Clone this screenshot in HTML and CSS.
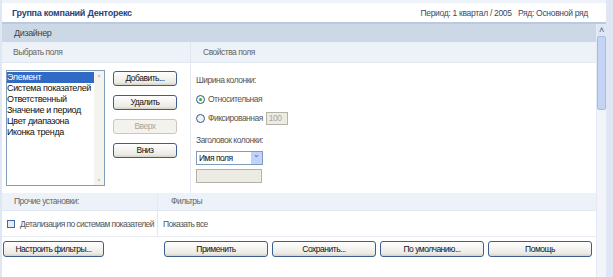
FILE: index.html
```html
<!DOCTYPE html>
<html lang="ru">
<head>
<meta charset="utf-8">
<link rel="stylesheet" href="styles.css">
</head>
<body>
<div class="frame">
  <div class="header">
    <span class="title">Группа компаний Денторекс</span>
    <span class="period">Период: 1 квартал / 2005&nbsp;&nbsp; Ряд: Основной ряд</span>
  </div>
  <div class="body-row">
    <div class="main">
      <div class="band">Дизайнер</div>
      <div class="sub sub-top">
        <div class="cell-l">Выбрать поля</div>
        <div class="cell-r">Свойства поля</div>
      </div>
      <div class="content">
        <div class="pick">
          <div class="listbox">
            <div class="items">
              <div class="item sel">Элемент</div>
              <div class="item">Система показателей</div>
              <div class="item">Ответственный</div>
              <div class="item">Значение и период</div>
              <div class="item">Цвет диапазона</div>
              <div class="item">Иконка тренда</div>
            </div>
            <div class="lscroll">
              <span class="arr">&#9650;</span>
              <span class="arr">&#9660;</span>
            </div>
          </div>
          <div class="btns">
            <div class="btn">Добавить...</div>
            <div class="btn">Удалить</div>
            <div class="btn disabled">Вверх</div>
            <div class="btn">Вниз</div>
          </div>
        </div>
        <div class="props">
          <div class="lbl">Ширина колонки:</div>
          <div class="radio-row"><span class="radio on"></span>Относительная</div>
          <div class="radio-row"><span class="radio"></span>Фиксированная<span class="num">100</span></div>
          <div class="lbl lbl2">Заголовок колонки:</div>
          <div class="select"><span>Имя поля</span><span class="sel-btn">&#8964;</span></div>
          <div class="dis-input"></div>
        </div>
      </div>
      <div class="sub sub-mid">
        <div class="cell-l2">Прочие установки:</div>
        <div class="cell-r2">Фильтры</div>
      </div>
      <div class="opts">
        <div class="cell-l2"><span class="chk"></span>Детализация по системам показателей</div>
        <div class="cell-r2 plain">Показать все</div>
      </div>
      <div class="actions">
        <div class="btn wide first">Настроить фильтры...</div>
        <div class="right-btns">
          <div class="btn wide">Применить</div>
          <div class="btn wide">Сохранить...</div>
          <div class="btn wide">По умолчанию...</div>
          <div class="btn wide">Помощь</div>
        </div>
      </div>
    </div>
    <div class="vscroll">
      <div class="vs-up">&#708;</div>
      <div class="vs-thumb"></div>
    </div>
  </div>
</div>
</body>
</html>
```
FILE: styles.css
```css
* { box-sizing: border-box; }
html, body { margin: 0; padding: 0; }
body {
  width: 613px;
  height: 277px;
  overflow: hidden;
  background: #dfe7f4;
  font-family: "Liberation Sans", Arial, sans-serif;
  font-size: 9px;
  letter-spacing: -0.35px;
  color: #222;
}
.frame {
  margin-left: 2px;
  width: 604px;
  height: 277px;
  background: #fff;
  display: flex;
  flex-direction: column;
}
.header {
  height: 24px;
  border-top: 3px solid #eef2f9;
  border-bottom: 2px solid #b9c9e2;
  background: #fff;
  display: flex;
  align-items: center;
  justify-content: space-between;
  padding: 0 18px 0 10px;
  white-space: nowrap;
}
.title { color: #27437c; font-weight: bold; letter-spacing: -0.25px; font-size: 9px; }
.period { color: #3b4a66; font-size: 8.5px; letter-spacing: -0.3px; }
.body-row { flex: 1; display: flex; }
.main { width: 594px; display: flex; flex-direction: column; }
.band {
  height: 18px;
  background: #cdd8e6;
  color: #444;
  padding-left: 12px;
  line-height: 18px;
}
.sub {
  display: flex;
  background: #edf2f9;
  color: #666;
  border-bottom: 1px solid #e2e8f2;
  white-space: nowrap;
  font-size: 8.5px;
  letter-spacing: -0.5px;
}
.sub-top { height: 21px; line-height: 20px; }
.cell-l { width: 189px; padding-left: 11px; border-right: 1px solid #dfe6f1; }
.cell-r { padding-left: 12px; }
.content { display: flex; height: 130px; }
.pick {
  width: 189px;
  border-right: 1px solid #e6ebf3;
  display: flex;
  padding: 7px 0 0 4px;
  gap: 8px;
}
.listbox {
  width: 99px;
  height: 116px;
  border: 1px solid #7f9db9;
  display: flex;
  background: #fff;
}
.items { flex: 1; padding-top: 1px; }
.item { height: 11px; line-height: 11px; color: #111; padding-left: 0; white-space: nowrap; }
.item.sel { background: #316ac5; color: #fff; }
.lscroll {
  width: 10px;
  background: #f4f3ee;
  display: flex;
  flex-direction: column;
  justify-content: space-between;
  align-items: center;
}
.arr { font-size: 5px; color: #c9c7ba; line-height: 9px; letter-spacing: 0; }
.btns { display: flex; flex-direction: column; gap: 9px; padding-top: 1px; }
.btn {
  width: 64px;
  height: 15px;
  border: 1px solid #3d5f8f;
  border-radius: 3px;
  background: linear-gradient(#fefefe, #ecebe6 80%, #d6d2c4);
  text-align: center;
  line-height: 13px;
  color: #111;
  white-space: nowrap;
  font-size: 8.5px;
  letter-spacing: -0.5px;
}
.btn.disabled { border-color: #cac8bb; color: #aaa89a; background: #f3f2ec; }
.props { padding: 12px 0 0 5px; color: #555; white-space: nowrap; font-size: 8.5px; letter-spacing: -0.5px; }
.lbl { height: 11px; line-height: 11px; }
.radio-row { display: flex; align-items: center; height: 12px; margin-top: 7px; }
.radio {
  width: 9px; height: 9px; border-radius: 50%;
  border: 1px solid #2d5b99;
  background: #f3f3ee;
  margin-right: 3px;
  position: relative;
}
.radio.on::after {
  content: ""; position: absolute; left: 2px; top: 2px;
  width: 3px; height: 3px; border-radius: 50%; background: #30b030;
}
.num {
  margin-left: 3px;
  width: 22px; height: 13px;
  border: 1px solid #b5b3a5;
  background: #ecebe4;
  color: #aaa;
  line-height: 11px;
  padding-left: 2px;
}
.lbl2 { margin-top: 11px; }
.select {
  margin-top: 5px;
  width: 67px; height: 14px;
  border: 1px solid #7f9db9;
  display: flex;
  justify-content: space-between;
  line-height: 12px;
  color: #111;
  padding-left: 2px;
}
.sel-btn {
  width: 11px; background: #c1d3fb; color: #4d6185; text-align: center;
  font-size: 8px; line-height: 6px;
}
.dis-input {
  margin-top: 4px;
  width: 66px; height: 14px;
  border: 1px solid #b5b3a5;
  background: #ecebe4;
}
.sub-mid { height: 18px; line-height: 17px; }
.cell-l2 { width: 156px; flex: none; padding-left: 12px; border-right: 1px solid #e3e9f2; display: flex; align-items: center; white-space: nowrap; }
.cell-r2 { padding-left: 13px; }
.opts {
  display: flex;
  height: 26px;
  line-height: 26px;
  color: #555;
  border-bottom: 1px solid #e8edf5;
  font-size: 8.5px;
  letter-spacing: -0.6px;
}
.opts .cell-l2 { padding-left: 5px; }
.opts .plain { padding-left: 5px; color: #555; }
.chk {
  width: 8px; height: 8px; border: 1px solid #3e6aa8; background: #eaeaea;
  margin-right: 5px; flex: none;
}
.actions { display: flex; padding: 4px 0 0 1px; justify-content: space-between; }
.right-btns { display: flex; gap: 4px; padding-right: 4px; }
.btn.wide { width: 104px; height: 16px; line-height: 14px; }
.btn.wide.first { width: 101px; }
.vscroll {
  width: 10px;
  background: #f2f4f9;
  border-left: 1px solid #e5ebf5;
}
.vs-up { height: 12px; text-align: center; color: #4d6185; font-size: 9px; line-height: 12px; background: #dfe7f4; }
.vs-thumb { height: 74px; background: #c5d4f5; border: 1px solid #a8bbe8; border-radius: 2px; }
```
